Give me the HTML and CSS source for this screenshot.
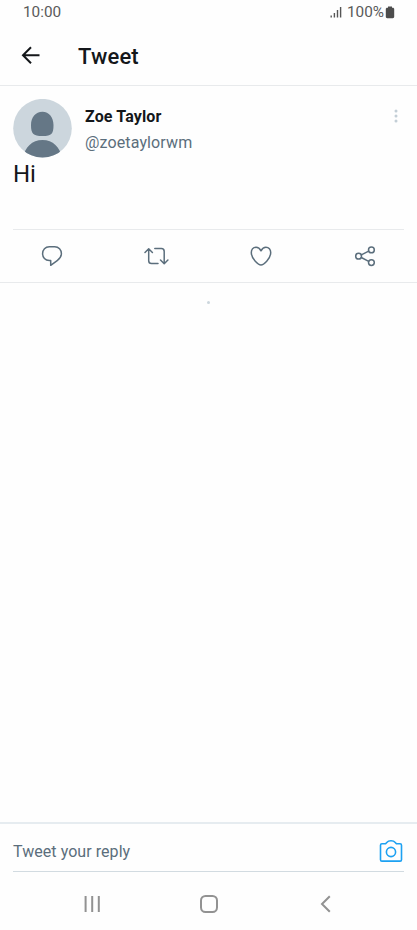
FILE: index.html
```html
<!DOCTYPE html>
<html lang="en">
<head>
<meta charset="utf-8">
<meta name="viewport" content="width=device-width, initial-scale=1">
<title>Tweet</title>
<link rel="stylesheet" href="styles.css">
</head>
<body>
<div class="screen">
  <div class="status">
    <span class="clock">10:00</span>
    <svg class="signal" width="12" height="12" viewBox="0 0 12 12"><path d="M1.200 9.500v2M4.400 7v4.500M7.500 4v7.500M10.600 1v10.500"/></svg>
    <span class="percent">100%</span>
    <svg class="battery" width="10" height="13" viewBox="0 0 10 13"><path d="M3 .5h4v1.300h.8c.8 0 1.400.6 1.400 1.400v7.600c0 .8-.6 1.400-1.400 1.400H2.200c-.8 0-1.400-.6-1.400-1.400V3.200c0-.8.6-1.400 1.400-1.400H3z"/></svg>
  </div>
  <header class="header">
    <svg class="back" width="20" height="20" viewBox="0 0 20 20"><path d="M18.500 10.300H2.500M10 2.300 2 10.300l8 8"/></svg>
    <h1 class="title">Tweet</h1>
  </header>
  <main class="content">
    <article class="tweet">
      <div class="author">
        <svg class="avatar" width="59" height="59" viewBox="0 0 59 59">
          <clipPath id="round"><circle cx="29.500" cy="29.200" r="29.300"/></clipPath>
          <g clip-path="url(#round)">
            <rect class="avatar-bg" width="59" height="59"/>
            <path class="avatar-person" d="M29.500 12.800C22.500 12.800 18 18.500 18 26c0 8.500 2 11 11.500 11S40.500 34.500 40.500 26C40.500 18.500 36 12.800 29.500 12.800zM10 59c2-11 9-18 19.500-18S47 48 49 59z"/>
          </g>
        </svg>
        <div class="names">
          <div class="name">Zoe Taylor</div>
          <div class="handle">@zoetaylorwm</div>
        </div>
        <svg class="more" width="4" height="14" viewBox="0 0 4 14"><circle cx="2" cy="2" r="1.500"/><circle cx="2" cy="7" r="1.500"/><circle cx="2" cy="12" r="1.500"/></svg>
      </div>
      <p class="text">Hi</p>
    </article>
    <div class="actions">
      <svg width="26" height="24" viewBox="0 0 26 24"><path d="M10.300 2.700h5.400c4 0 6.700 3 6.700 6.900 0 3.200-1.500 5-4.200 7l-6.500 4.700v-4.700h-1.400c-4.100 0-6.700-3-6.700-7s2.700-6.900 6.700-6.900z"/></svg>
      <svg width="26" height="24" viewBox="0 0 26 24"><path d="M2 8.500 5.700 4.800l3.700 3.700M5.700 5v11.800c0 1.700 1 2.800 2.800 2.800H15M11.800 4.600h6.600c1.800 0 2.800 1 2.800 2.800v12M17.500 16l3.700 3.700 3.700-3.700"/></svg>
      <svg width="26" height="24" viewBox="0 0 26 24"><path d="M13 6.800C11.700 4.300 10 3.200 8.100 3.200c-3 0-4.800 2.400-4.800 5.400 0 6.300 7.400 12.400 9.700 12.400s9.700-6.100 9.700-12.400c0-3-1.800-5.400-4.800-5.400-1.900 0-3.600 1.100-4.900 3.600z"/></svg>
      <svg width="26" height="24" viewBox="0 0 26 24"><circle cx="6.600" cy="12.200" r="2.900"/><circle cx="19.400" cy="5.900" r="2.900"/><circle cx="19.400" cy="18.600" r="2.900"/><path d="m9.300 10.900 7.400-3.700M9.300 13.500l7.400 3.800"/></svg>
    </div>
    <div class="end"></div>
  </main>
  <footer class="composer">
    <div class="field">
      <span class="prompt">Tweet your reply</span>
      <svg class="camera" width="24" height="24" viewBox="0 0 24 24"><path d="M6.600 4.800 8 3.200C8.800 2.200 10 1.800 12 1.800s3.200.4 4 1.400l1.400 1.600h3.700c.9 0 1.400.5 1.400 1.400v14.500c0 .9-.5 1.400-1.400 1.400H2.900c-.9 0-1.400-.5-1.400-1.400V6.200c0-.9.5-1.400 1.400-1.400z"/><circle cx="12" cy="13" r="4.600"/></svg>
    </div>
  </footer>
  <nav class="system">
    <svg width="20" height="20" viewBox="0 0 20 20"><path d="M3.600 2v16M10.200 2v16M16.800 2v16"/></svg>
    <svg width="20" height="20" viewBox="0 0 20 20"><rect x="2" y="2" width="16" height="16" rx="4.500"/></svg>
    <svg width="20" height="20" viewBox="0 0 20 20"><path d="M14.800 2.200 7 10l7.800 7.800"/></svg>
  </nav>
</div>
</body>
</html>
```
FILE: styles.css
```css
* { box-sizing: border-box; }

body {
  margin: 0;
  background: #fefefe;
  color: #14171a;
  font-family: Roboto, "Liberation Sans", sans-serif;
}

svg { display: block; flex: none; }

.screen {
  height: 930px;
  display: flex;
  flex-direction: column;
}

.status {
  height: 25px;
  padding: 0 22px 1px 23px;
  display: flex;
  align-items: center;
  color: #5a5a5a;
  font-size: 15.300px;
}
.clock { margin-right: auto; }
.signal { fill: none; stroke: #555; stroke-width: 1.400; margin-right: 5px; }
.percent { margin-right: 1px; }
.battery { fill: #4c4c4c; }

.header {
  height: 61px;
  padding: 0 21px;
  display: flex;
  align-items: center;
  gap: 37px;
  border-bottom: 1px solid #e8eaec;
}
.back { fill: none; stroke: #14171a; stroke-width: 2; }
.title {
  margin: 2px 0 0;
  font-size: 22px;
  font-weight: 500;
  letter-spacing: 0.150px;
}

.content { flex: 1; }

.tweet {
  height: 144px;
  margin: 0 13px;
  padding-top: 13px;
  border-bottom: 1px solid #e8eaec;
}
.author { display: flex; height: 59px; }
.avatar-bg { fill: #ccd6dd; }
.avatar-person { fill: #657786; }
.names {
  flex: 1;
  margin-left: 13px;
  padding-top: 5px;
  font-size: 16px;
  line-height: 26px;
  letter-spacing: 0.130px;
}
.name { font-weight: 700; }
.handle { color: #5b6e7c; }
.more { margin: 10px 6.500px 0 0; fill: #c3ced6; }
.text { margin: 2px 0 0; font-size: 24px; line-height: 28px; }

.actions {
  height: 53px;
  display: grid;
  grid-template-columns: repeat(4, 1fr);
  place-items: center;
  border-bottom: 1px solid #e8eaec;
  fill: none;
  stroke: #5b6e7c;
  stroke-width: 1.500;
  stroke-linejoin: round;
  stroke-linecap: round;
}

.end {
  width: 3px;
  height: 3px;
  margin: 18px auto 0;
  border-radius: 50%;
  background: #ccd6dd;
}

.composer {
  height: 50px;
  padding: 0 13px;
  border-top: 2px solid #e6ecf0;
}
.field {
  height: 48px;
  padding: 7px 1px 0 0;
  display: flex;
  align-items: center;
  justify-content: space-between;
  border-bottom: 1px solid #d2dbe1;
}
.prompt { color: #5b6e7c; font-size: 16px; letter-spacing: 0.060px; }
.camera { fill: none; stroke: #1da1f2; stroke-width: 1.600; }

.system {
  height: 58px;
  padding: 6px 82px 0;
  display: flex;
  align-items: center;
  justify-content: space-between;
  fill: none;
  stroke: #929292;
  stroke-width: 2;
}
```
